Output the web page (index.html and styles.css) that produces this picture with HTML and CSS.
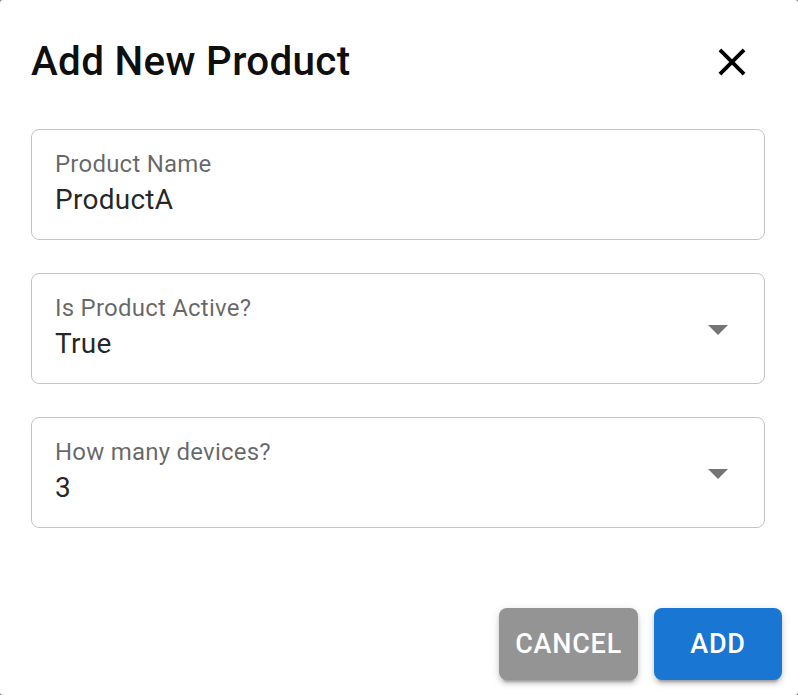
FILE: index.html
```html
<!DOCTYPE html>
<html lang="en">
<head>
<meta charset="utf-8">
<title>Add New Product</title>
<link rel="stylesheet" href="styles.css">
</head>
<body>
<div class="dialog">
  <div class="dialog-title">
    <h2 class="title">Add New Product</h2>
    <button class="close-btn" aria-label="close">
      <svg class="close-icon" viewBox="0 0 24 24"><path d="M19 6.41L17.59 5 12 10.59 6.41 5 5 6.41 10.59 12 5 17.59 6.41 19 12 13.41 17.59 19 19 17.59 13.41 12z"/></svg>
    </button>
  </div>
  <div class="dialog-content">
    <div class="field">
      <div class="field-text">
        <div class="field-label">Product Name</div>
        <div class="field-value">ProductA</div>
      </div>
    </div>
    <div class="field">
      <div class="field-text">
        <div class="field-label">Is Product Active?</div>
        <div class="field-value">True</div>
      </div>
      <svg class="arrow-icon" viewBox="0 0 24 24"><path d="M7 10l5 5 5-5z"/></svg>
    </div>
    <div class="field">
      <div class="field-text">
        <div class="field-label">How many devices?</div>
        <div class="field-value">3</div>
      </div>
      <svg class="arrow-icon" viewBox="0 0 24 24"><path d="M7 10l5 5 5-5z"/></svg>
    </div>
  </div>
  <div class="dialog-actions">
    <button class="btn btn-cancel">Cancel</button>
    <button class="btn btn-add">Add</button>
  </div>
</div>
</body>
</html>
```
FILE: styles.css
```css
html, body {
  margin: 0;
  padding: 0;
}
body {
  background: #7a7a7a;
  font-family: Roboto, "Liberation Sans", Arial, sans-serif;
}
.dialog {
  width: 798px;
  height: 695px;
  background: #fff;
  border-radius: 3px;
  box-sizing: border-box;
  display: flex;
  flex-direction: column;
  overflow: hidden;
}
.dialog-title {
  display: flex;
  align-items: center;
  justify-content: space-between;
  padding: 38px 43px 0 31px;
}
.title {
  margin: 0;
  font-size: 40.4px;
  line-height: 48px;
  font-weight: 500;
  color: rgba(0, 0, 0, 0.95);
  letter-spacing: 0.0075em;
}
.close-btn {
  border: 0;
  background: none;
  padding: 0;
  margin: 0;
  width: 46px;
  height: 46px;
  display: flex;
  cursor: pointer;
}
.close-icon {
  width: 46px;
  height: 46px;
  fill: #000;
}
.dialog-content {
  display: flex;
  flex-direction: column;
  gap: 33px;
  padding: 43px 33px 0 31px;
}
.field {
  height: 111px;
  box-sizing: border-box;
  border: 1px solid #c4c4c4;
  border-radius: 8px;
  display: flex;
  align-items: center;
  padding: 0 22px 0 23px;
}
.field-text {
  flex: 1;
  align-self: flex-start;
  padding-top: 20px;
}
.field-label {
  font-size: 24px;
  line-height: 28px;
  letter-spacing: 0.00938em;
  color: rgba(0, 0, 0, 0.6);
}
.field-value {
  margin-top: 6px;
  font-size: 28px;
  line-height: 32px;
  letter-spacing: 0.00938em;
  color: rgba(0, 0, 0, 0.87);
}
.arrow-icon {
  width: 48px;
  height: 48px;
  fill: #757575;
}
.dialog-actions {
  margin-top: auto;
  display: flex;
  justify-content: flex-end;
  gap: 16px;
  padding: 0 16px 15px 0;
}
.btn {
  height: 72px;
  min-width: 128px;
  padding: 0 16px;
  border: 0;
  border-radius: 8px;
  font-family: Roboto, "Liberation Sans", Arial, sans-serif;
  font-size: 27px;
  font-weight: 500;
  letter-spacing: 0.02857em;
  text-transform: uppercase;
  color: #fff;
  box-shadow: 0 6px 2px -4px rgba(0,0,0,0.2), 0 4px 4px 0 rgba(0,0,0,0.14), 0 2px 10px 0 rgba(0,0,0,0.12);
  cursor: pointer;
}
.btn-cancel {
  background: #949494;
}
.btn-add {
  background: #1976d2;
}
```
